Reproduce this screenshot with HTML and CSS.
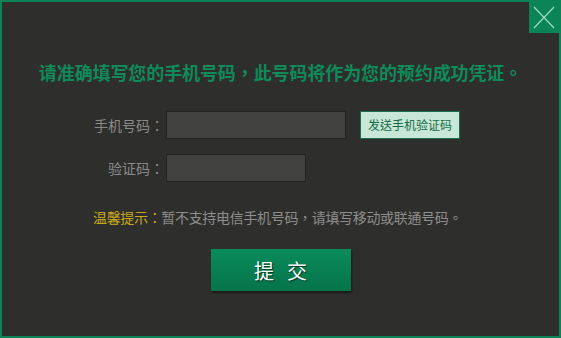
FILE: index.html
```html
<!DOCTYPE html>
<html lang="zh-Hant">
<head>
<meta charset="utf-8">
<title>预约</title>
<link rel="stylesheet" href="styles.css">
</head>
<body>
<div class="dialog">
  <a class="close" href="#" aria-label="关闭">
    <svg width="30" height="31" viewBox="0 0 30 31"><path d="M5 5 L25 26 M25 5 L5 26" stroke="#9fdcbc" stroke-width="1.2" fill="none"/></svg>
  </a>
  <h1 class="title">请准确填写您的手机号码，此号码将作为您的预约成功凭证。</h1>
  <div class="form">
    <div class="row">
      <label class="label">手机号码：</label>
      <input class="field field-phone" type="text">
      <button class="send">发送手机验证码</button>
    </div>
    <div class="row row-code">
      <label class="label">验证码：</label>
      <input class="field field-code" type="text">
    </div>
  </div>
  <p class="tip"><span class="tip-key">温馨提示：</span>暂不支持电信手机号码，请填写移动或联通号码。</p>
  <div class="actions">
    <button class="submit"><span>提</span><span>交</span></button>
  </div>
</div>
</body>
</html>
```
FILE: styles.css
```css
html, body {
  margin: 0;
  padding: 0;
  background: #2e2e2c;
}
body {
  width: 561px;
  height: 338px;
  overflow: hidden;
  font-family: "Noto Sans CJK TC", "Noto Sans CJK SC", sans-serif;
}
.dialog {
  position: relative;
  box-sizing: border-box;
  width: 561px;
  height: 338px;
  border: 2px solid #0b8557;
  background: #2e2e2c;
  padding-top: 58px;
}
.close {
  position: absolute;
  top: 0;
  right: 0;
  width: 30px;
  height: 31px;
  background: #0b8557;
  display: block;
}
.close svg { display: block; }
.title {
  margin: 0;
  font-size: 18px;
  line-height: 24px;
  font-weight: bold;
  color: #0f8a59;
  text-align: center;
  letter-spacing: -0.1px;
}
.form {
  margin-top: 27px;
}
.row {
  display: flex;
  align-items: center;
  height: 28px;
}
.row-code {
  margin-top: 15px;
}
.label {
  width: 162px;
  margin-right: 2px;
  text-align: right;
  font-size: 14px;
  color: #8a8a8a;
  line-height: 28px;
}
.field {
  box-sizing: border-box;
  height: 28px;
  margin: 0;
  padding: 0 6px;
  background: #414140;
  border: 1px solid #232323;
  outline: none;
  color: #ddd;
}
.field-phone { width: 180px; }
.field-code { width: 140px; }
.send {
  box-sizing: border-box;
  margin-left: 14px;
  width: 100px;
  height: 28px;
  padding: 0;
  background: #c8e7d8;
  border: 1px solid #1b6e4b;
  color: #106b44;
  font-family: "Noto Sans CJK TC", "Noto Sans CJK SC", sans-serif;
  font-size: 12px;
  line-height: 26px;
}
.tip {
  margin: 25px 0 0 91px;
  font-size: 14px;
  line-height: 20px;
  letter-spacing: -0.33px;
  color: #8e8e8e;
}
.tip-key {
  color: #c9a71e;
}
.actions {
  margin-top: 22px;
  display: flex;
  justify-content: center;
}
.submit {
  display: flex;
  justify-content: center;
  align-items: center;
  gap: 13px;
  width: 140px;
  height: 42px;
  padding: 0;
  border: none;
  background: linear-gradient(#0a8b5b, #06744a);
  box-shadow: 1px 2px 2px rgba(0, 0, 0, 0.45);
  color: #fff;
  font-family: "Noto Sans CJK TC", "Noto Sans CJK SC", sans-serif;
  font-size: 20px;
  text-shadow: 1px 1px 1px rgba(0, 0, 0, 0.6);
}
```
